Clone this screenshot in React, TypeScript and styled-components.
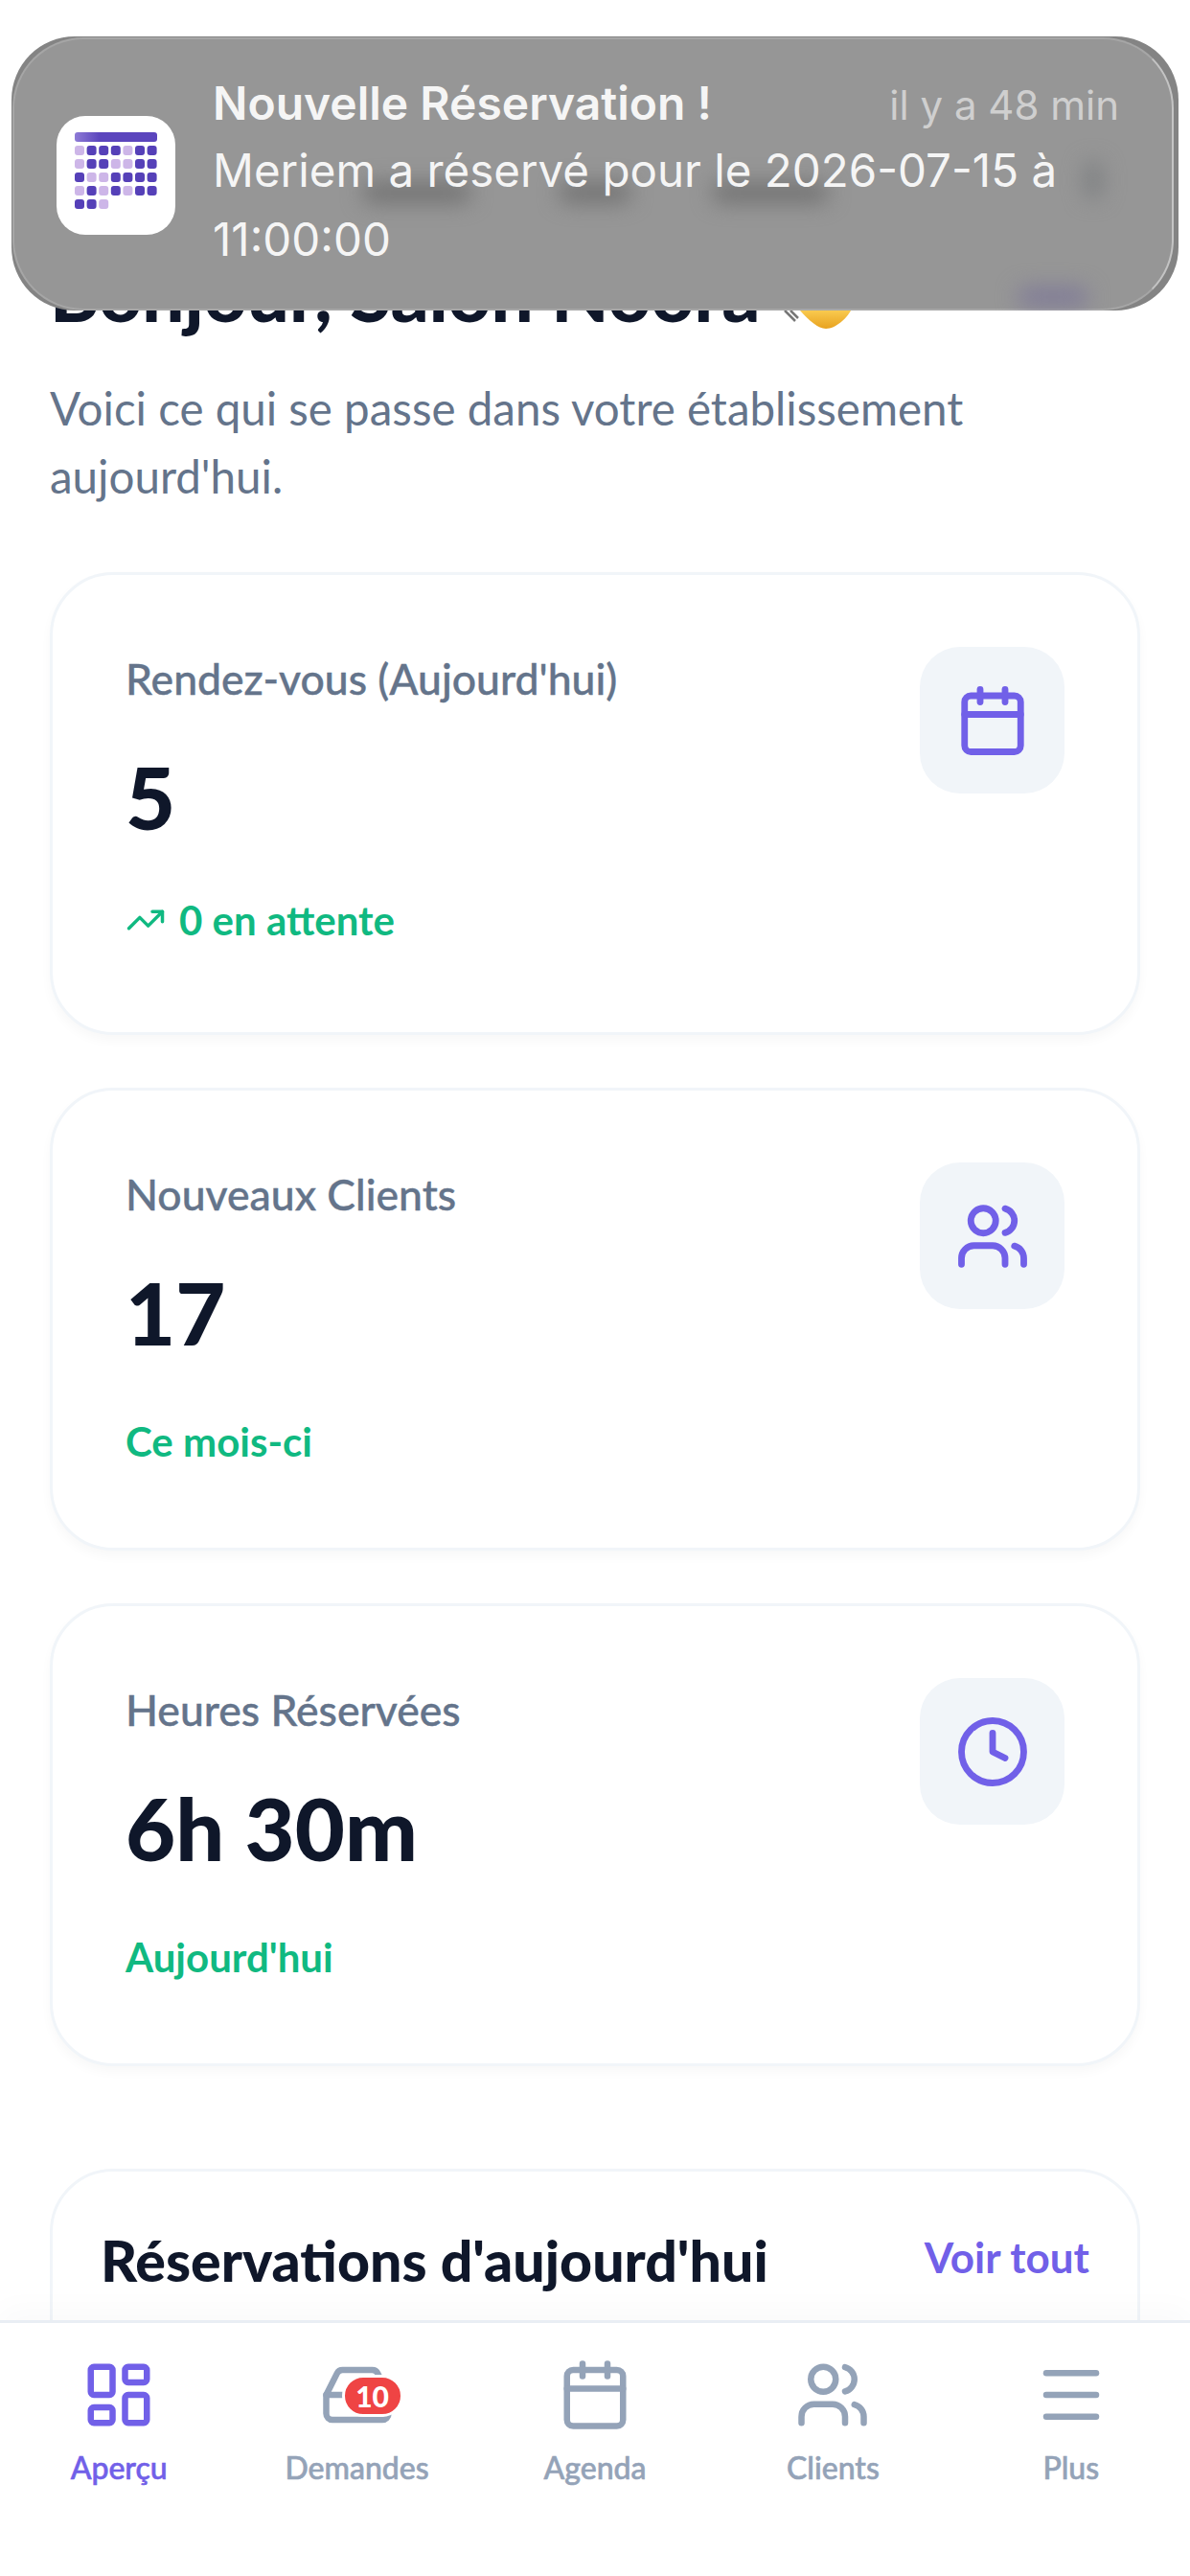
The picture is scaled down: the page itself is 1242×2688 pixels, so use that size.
import { Calendar, Clock, Inbox, LayoutDashboard, Menu, TrendingUp, Users } from "lucide-react";
import styled, { createGlobalStyle } from "styled-components";

const purple = "#7160e8";
const navGray = "#94a3b8";

const GlobalStyle = createGlobalStyle`
  html, body {
    margin: 0;
    padding: 0;
    background: #fff;
  }
  * {
    box-sizing: border-box;
  }
`;

// notification app icon: which cells of the grid are pale
const iconRows = [
  [1, 0, 0, 0, 1, 0, 0],
  [1, 0, 0, 1, 1, 0, 0],
  [0, 1, 1, 0, 0, 0, 0],
  [1, 0, 1, 0, 1, 0, 0],
  [0, 0, 1],
];

// the page content showing through the notification's blur
const smudges = [
  { left: 366, top: 153, width: 114, height: 20, color: "#707070" },
  { left: 571, top: 153, width: 76, height: 20, color: "#707070" },
  { left: 731, top: 153, width: 122, height: 20, color: "#707070" },
  { left: 1120, top: 130, width: 18, height: 40, color: "#7d7f81" },
  { left: 1050, top: 262, width: 74, height: 20, color: "#7f7a97" },
];

const stats = [
  { label: "Rendez-vous (Aujourd'hui)", value: "5", note: "0 en attente", trend: true, Icon: Calendar },
  { label: "Nouveaux Clients", value: "17", note: "Ce mois-ci", trend: false, Icon: Users },
  { label: "Heures Réservées", value: "6h 30m", note: "Aujourd'hui", trend: false, Icon: Clock },
];

const tabs = [
  { label: "Aperçu", Icon: LayoutDashboard, active: true },
  { label: "Demandes", Icon: Inbox, badge: "10" },
  { label: "Agenda", Icon: Calendar },
  { label: "Clients", Icon: Users },
  { label: "Plus", Icon: Menu },
];

function App() {
  return (
    <>
      <GlobalStyle />
      <Screen>
        <Content>
          <Title>
            Bonjour, Salon Noora
            <Wave viewBox="0 0 72 45" aria-hidden="true">
              <defs>
                <linearGradient id="waveFill" x1="0" y1="0" x2="0" y2="1">
                  <stop offset="0.5" stopColor="#fbcf55" />
                  <stop offset="1" stopColor="#e8a21f" />
                </linearGradient>
              </defs>
              <path d="M10 0 H72 L70 24 C66 32 54 43 44 43 C36 43 26 34 17 24 Z" fill="url(#waveFill)" />
              <path d="M1 24 L12 35 M7 24 L15 32" stroke="#777" strokeWidth="2.5" fill="none" />
            </Wave>
          </Title>
          <Intro>Voici ce qui se passe dans votre établissement aujourd'hui.</Intro>
          <Stats>
            {stats.map(({ label, value, note, trend, Icon }) => (
              <StatCard key={label}>
                <StatText>
                  <StatLabel>{label}</StatLabel>
                  <StatValue>{value}</StatValue>
                  <StatNote $trend={trend}>
                    {trend && <TrendingUp size={42} strokeWidth={2} />}
                    {note}
                  </StatNote>
                </StatText>
                <IconBox>
                  <Icon size={78} strokeWidth={2.1} color={purple} />
                </IconBox>
              </StatCard>
            ))}
          </Stats>
          <BookingsCard>
            <BookingsTitle>Réservations d'aujourd'hui</BookingsTitle>
            <SeeAll>Voir tout</SeeAll>
          </BookingsCard>
        </Content>
        <TabBar>
          {tabs.map(({ label, Icon, active, badge }) => (
            <Tab key={label} $active={!!active}>
              <TabIcon>
                <Icon size={78} strokeWidth={2} />
                {badge && <Badge>{badge}</Badge>}
              </TabIcon>
              <TabLabel>{label}</TabLabel>
            </Tab>
          ))}
        </TabBar>
        <Notification>
          {smudges.map((s) => (
            <Smudge key={s.left} $left={s.left} $top={s.top} $width={s.width} $height={s.height} $color={s.color} />
          ))}
          <AppIcon viewBox="0 0 124 124" aria-hidden="true">
            <defs>
              <linearGradient id="barFill" x1="0" y1="0" x2="1" y2="0">
                <stop offset="0" stopColor="#8e7bd6" />
                <stop offset="0.3" stopColor="#5b45bd" />
              </linearGradient>
            </defs>
            <rect width="124" height="124" rx="30" fill="#fff" />
            <rect x="19" y="17" width="86" height="10" rx="3" fill="url(#barFill)" />
            {iconRows.map((row, r) =>
              row.map((pale, c) => (
                <rect
                  key={`${r}-${c}`}
                  x={19 + c * 12.6}
                  y={31 + r * 14}
                  width="10"
                  height="10"
                  rx="3"
                  fill={pale ? "#cdb6e8" : "#5540b8"}
                />
              ))
            )}
          </AppIcon>
          <NotifBody>
            <NotifHead>
              <NotifTitle>Nouvelle Réservation !</NotifTitle>
              <NotifTime>il y a 48 min</NotifTime>
            </NotifHead>
            <NotifText>Meriem a réservé pour le 2026-07-15 à 11:00:00</NotifText>
          </NotifBody>
        </Notification>
      </Screen>
    </>
  );
}

const Screen = styled.div`
  position: relative;
  display: flex;
  flex-direction: column;
  width: 1242px;
  height: 2688px;
  overflow: hidden;
  background: #fff;
  font-family: Lato, "Open Sans", sans-serif;
`;

const Content = styled.main`
  flex: 1;
  min-height: 0;
  overflow: hidden;
  padding: 264px 52px 0;
`;

const Title = styled.h1`
  display: flex;
  align-items: flex-end;
  margin: 0;
  height: 84px;
  font-size: 78px;
  line-height: 84px;
  font-weight: 900;
  color: #0f172a;
`;

const Wave = styled.svg`
  flex: none;
  width: 72px;
  height: 45px;
  margin: 0 0 3px 25px;
`;

const Intro = styled.p`
  margin: 42px 0 0;
  width: 1060px;
  font-size: 47.5px;
  line-height: 71px;
  color: #64748b;
`;

const Stats = styled.section`
  display: flex;
  flex-direction: column;
  gap: 55px;
  margin-top: 65px;
`;

const StatCard = styled.article`
  display: flex;
  justify-content: space-between;
  align-items: flex-start;
  height: 483px;
  padding: 75px 76px 0;
  border: 3px solid #f1f5f9;
  border-radius: 66px;
  background: #fff;
  box-shadow: 0 6px 12px rgba(15, 23, 42, 0.03);
`;

const StatText = styled.div`
  display: flex;
  flex-direction: column;
  align-items: flex-start;
`;

const StatLabel = styled.div`
  margin-top: 3px;
  font-size: 44.5px;
  line-height: 60px;
  font-weight: 500;
  color: #64748b;
  -webkit-text-stroke: 0.4px #64748b;
`;

const StatValue = styled.div`
  margin: 39px 0 45px;
  font-size: 90px;
  line-height: 108px;
  font-weight: 900;
  color: #0f172a;
`;

const StatNote = styled.div<{ $trend: boolean }>`
  display: flex;
  align-items: center;
  gap: 14px;
  margin-top: ${(props) => (props.$trend ? 0 : 6)}px;
  font-size: 42px;
  line-height: 60px;
  font-weight: 700;
  color: #10b981;
`;

const IconBox = styled.div`
  display: flex;
  align-items: center;
  justify-content: center;
  width: 151px;
  height: 153px;
  border-radius: 42px;
  background: #f1f5f9;
`;

const BookingsCard = styled.section`
  display: flex;
  justify-content: space-between;
  align-items: flex-start;
  height: 400px;
  margin-top: 107px;
  padding: 53px 50px 0;
  border: 3px solid #f1f5f9;
  border-radius: 66px;
`;

const BookingsTitle = styled.h2`
  margin: 0;
  font-size: 59px;
  line-height: 80px;
  font-weight: 900;
  color: #0f172a;
`;

const SeeAll = styled.a`
  font-size: 44px;
  line-height: 72px;
  font-weight: 700;
  color: ${purple};
`;

const TabBar = styled.nav`
  display: grid;
  grid-template-columns: repeat(5, 1fr);
  flex: none;
  height: 267px;
  padding-top: 36px;
  border-top: 3px solid #e9eef4;
  background: #fff;
  box-shadow: 0 -12px 30px rgba(15, 23, 42, 0.025);
`;

const Tab = styled.div<{ $active: boolean }>`
  display: flex;
  flex-direction: column;
  align-items: center;
  color: ${(props) => (props.$active ? purple : navGray)};
`;

const TabIcon = styled.div`
  position: relative;
  width: 78px;
  height: 78px;
`;

const Badge = styled.span`
  position: absolute;
  top: 18px;
  left: 23px;
  width: 64px;
  height: 44px;
  border: 3px solid #fff;
  border-radius: 22px;
  background: #ef4444;
  color: #fff;
  font-size: 30px;
  line-height: 38px;
  font-weight: 900;
  text-align: center;
`;

const TabLabel = styled.span`
  margin-top: 15px;
  font-size: 32px;
  line-height: 44px;
  font-weight: 500;
  -webkit-text-stroke: 0.6px currentColor;
`;

const Notification = styled.aside`
  position: absolute;
  top: 38px;
  left: 12px;
  display: flex;
  align-items: center;
  gap: 39px;
  width: 1218px;
  height: 286px;
  padding: 0 62px 0 47px;
  overflow: hidden;
  border-radius: 66px;
  background: #848484;
  font-family: Inter, Roboto, sans-serif;
  color: #f5f5f5;

  /* the glass panel sits slightly inside the darker rim */
  &::before {
    content: "";
    position: absolute;
    inset: 1px 5px 0 1px;
    border: 2px solid #a6a6a6;
    border-right-color: #c4c4c4;
    border-radius: 74px;
    background: #969696;
  }
`;

const Smudge = styled.span<{ $left: number; $top: number; $width: number; $height: number; $color: string }>`
  position: absolute;
  left: ${(props) => props.$left}px;
  top: ${(props) => props.$top}px;
  width: ${(props) => props.$width}px;
  height: ${(props) => props.$height}px;
  background: ${(props) => props.$color};
  border-radius: 12px;
  filter: blur(11px);
`;

const AppIcon = styled.svg`
  position: relative;
  flex: none;
  width: 124px;
  height: 124px;
  margin-top: 4px;
  filter: blur(0.6px);
`;

const NotifBody = styled.div`
  position: relative;
  flex: 1;
  min-width: 0;
  margin-top: -4px;
`;

const NotifHead = styled.div`
  display: flex;
  justify-content: space-between;
  align-items: baseline;
`;

const NotifTitle = styled.div`
  font-size: 48px;
  line-height: 72px;
  font-weight: 600;
`;

const NotifTime = styled.div`
  font-size: 42px;
  line-height: 72px;
  color: #cfcfcf;
`;

const NotifText = styled.div`
  margin-top: -4px;
  font-size: 47.5px;
  line-height: 72px;
  width: 900px;
`;

export default App;
